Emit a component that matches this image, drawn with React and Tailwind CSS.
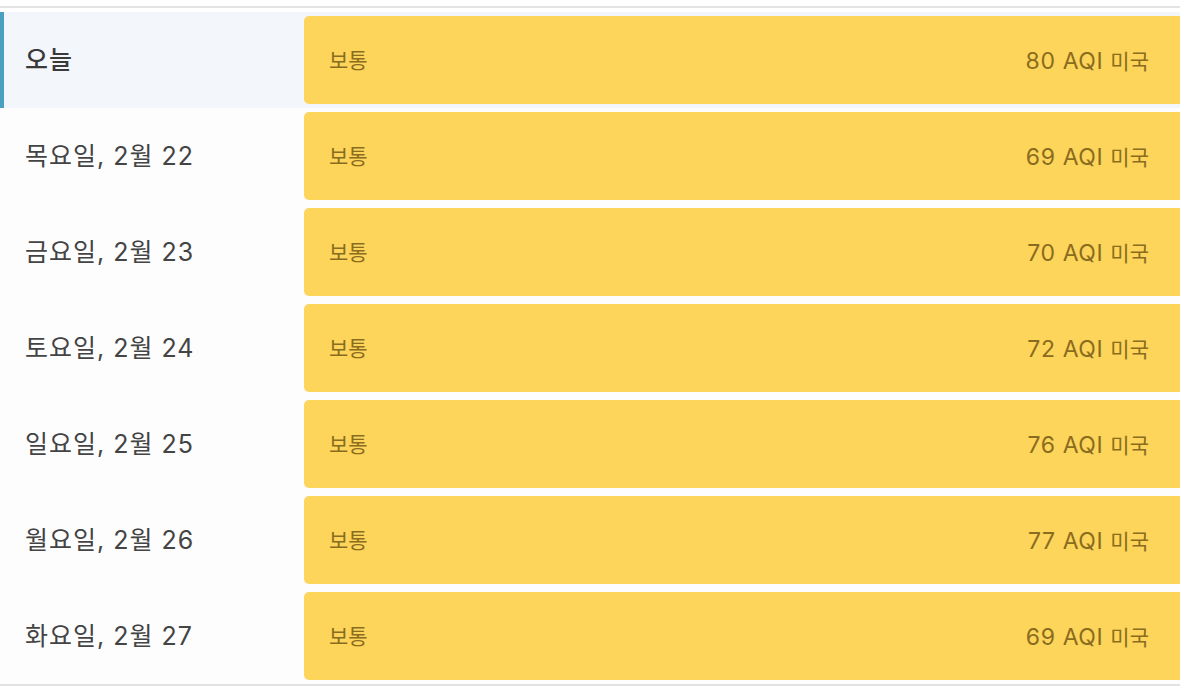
import React from "react";

const rows = [
  { day: "오늘", aqi: "80", today: true },
  { day: "목요일, 2월 22", aqi: "69" },
  { day: "금요일, 2월 23", aqi: "70" },
  { day: "토요일, 2월 24", aqi: "72" },
  { day: "일요일, 2월 25", aqi: "76" },
  { day: "월요일, 2월 26", aqi: "77" },
  { day: "화요일, 2월 27", aqi: "69" },
];

export default function App() {
  return (
    <div
      className="w-[1180px] h-[694px] bg-white pt-[6px] overflow-hidden"
      style={{ fontFamily: "Inter, 'Noto Sans CJK KR', sans-serif" }}
    >
      <div className="border-t-2 border-b-2 border-[#e3e3e3] pt-1 bg-white">
        {rows.map((r, i) => (
          <div
            key={i}
            className={`flex h-[96px] items-stretch ${r.today ? "bg-[#f3f6fb] border-l-4 border-[#4aa0c0]" : "bg-[#fdfdfd] pl-1"}`}
          >
            <div
              className={`w-[300px] flex items-center pl-[21px] pt-[2px] text-[25px] tracking-[1px] ${r.today ? "text-[#3a3a3a] font-medium" : "text-[#444]"}`}
            >
              {r.day}
            </div>
            <div className="flex-1 my-1 rounded-l-[5px] bg-[#fdd55a] flex items-center justify-between pl-[25px] pr-[31px] pt-[2px] text-[#8a6c1e] text-[21px]">
              <span>보통</span>
              <span className="flex items-baseline">
                <span className="text-[23px] tracking-[0.6px] whitespace-pre">{r.aqi} AQI </span>
                <span>미국</span>
              </span>
            </div>
          </div>
        ))}
      </div>
    </div>
  );
}
